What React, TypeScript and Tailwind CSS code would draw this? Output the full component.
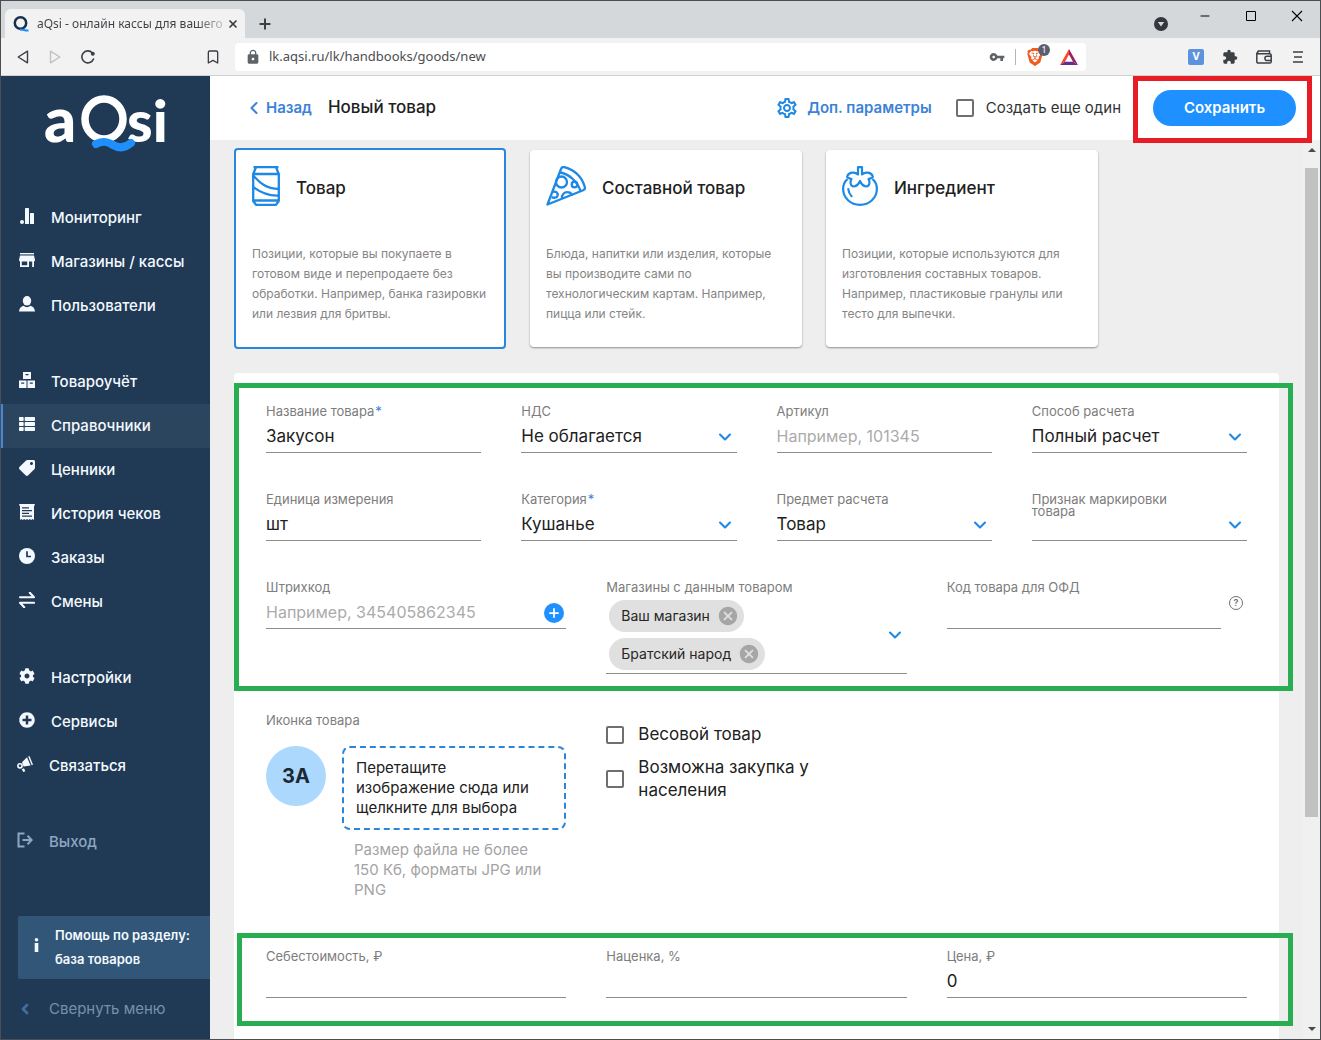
import type { ReactNode } from 'react';
import { ChevronDown, ChevronLeft, Bookmark, Plus, X, Minus } from 'lucide-react';
import { FaCog, FaPlusCircle, FaTag, FaThList } from 'react-icons/fa';
import { MdExtension, MdLock, MdOutlineSettings, MdVpnKey, MdCancel } from 'react-icons/md';
import { SiBrave } from 'react-icons/si';

const icon = 'h-4 w-4';

const BarsIcon = () => (
  <svg viewBox="0 0 16 16" className={icon} fill="currentColor">
    <circle cx="3" cy="14" r="2" />
    <rect x="6" y="0" width="4" height="16" rx="0.6" />
    <rect x="11" y="5" width="4" height="11" rx="0.6" />
  </svg>
);

const StoreIcon = () => (
  <svg viewBox="0 0 16 16" className={icon} fill="currentColor">
    <path d="M1 1h14v1.4H1z" />
    <path d="M1 3.4h14l1 4.6c0 1-.6 1.4-1 1.5V15h-1.8V9.6H10V15H1V9.5C.4 9.3 0 8.8 0 8zM2.8 9.6v3.700h5.400V9.600z" fillRule="evenodd" />
  </svg>
);

const UserIcon = () => (
  <svg viewBox="0 0 16 16" className={icon} fill="currentColor">
    <ellipse cx="8" cy="4.800" rx="4.200" ry="4.800" />
    <path d="M0 15.500c.2-3.500 2.200-5 4.600-5.700 1.800 1.800 5 1.800 6.800 0 2.400.7 4.400 2.200 4.600 5.700z" />
  </svg>
);

const BoxesIcon = () => (
  <svg viewBox="0 0 16 16" className={icon} fill="currentColor" fillRule="evenodd">
    <path d="M4 0h8v7H4zM6.500 2v1.300h3V2zM0 8.500h7.500V16H0zM2.200 10.500v1.300h3v-1.300zM8.500 8.500H16V16H8.500zM10.800 10.500v1.300h3v-1.300z" />
  </svg>
);

const ReceiptIcon = () => (
  <svg viewBox="0 0 16 16" className={icon} fill="currentColor" fillRule="evenodd">
    <path d="M.3 0h15.400v1.800H15V16l-1.400-1-1.400 1-1.400-1-1.400 1L8 15l-1.400 1-1.400-1-1.400 1-1.400-1L1 16V1.800H.3zM3 3.200v1.300h7V3.200zM3 6v1.300h10V6zM3 8.800v1.300h7V8.800zM3 11.500v1.300h10v-1.300z" />
  </svg>
);

const ClockIcon = () => (
  <svg viewBox="0 0 16 16" className={icon} fill="none">
    <circle cx="8" cy="8" r="8" fill="currentColor" />
    <path d="M8 3.200v5.300h4" stroke="#203a55" strokeWidth="1.700" />
  </svg>
);

const SwapIcon = () => (
  <svg viewBox="0 0 16 16" className={icon} fill="none" stroke="currentColor" strokeWidth="2.100" strokeLinecap="round" strokeLinejoin="round">
    <path d="M1 5.200h14L10.800.8M15 10.800H1l4.200 4.400" />
  </svg>
);

const HornIcon = () => (
  <svg viewBox="0 0 16 16" className={icon} fill="currentColor">
    <path d="M5 6.200 10 1.200l3.600 8.400-7 .8z" />
    <path d="m11.200.6 1.300-.6L16 8.700l-1.300.6z" />
    <circle cx="3" cy="9.800" r="2.100" fill="none" stroke="currentColor" strokeWidth="1.600" />
    <path d="m4.800 13.200 2.200-.9 1.300 3-2.100.7z" />
  </svg>
);

const ExitIcon = () => (
  <svg viewBox="0 0 16 16" className={icon} fill="none" stroke="currentColor" strokeWidth="2">
    <path d="M7.500 1.500h-6v13h6M5.500 8H14.500M10.500 3.800 14.700 8l-4.200 4.200" />
  </svg>
);

const Logo = () => (
  <svg viewBox="0 0 122 58" className="h-[58px] w-[122px] overflow-visible" role="img" aria-label="aQsi">
    <text x="-2" y="46" fill="#fff" fontFamily="Lato, sans-serif" fontWeight="900" fontSize="63">a</text>
    <ellipse cx="58" cy="23" rx="19" ry="20" fill="none" stroke="#fff" strokeWidth="7.500" />
    <text x="81" y="46" fill="#fff" fontFamily="Lato, sans-serif" fontWeight="900" fontSize="58">si</text>
    <path d="M50 48c7-4 12-2 17 1s11 4 18-2" fill="none" stroke="#1f8ffb" strokeWidth="8" strokeLinecap="round" />
  </svg>
);

const CanIcon = () => (
  <svg viewBox="0 0 28 40" className="h-10 w-7" fill="none" stroke="#1e88e5" strokeWidth="2.300" strokeLinejoin="round">
    <path d="M1.500 1.200h25M4 1.200 1.200 8v27L4 38.800h20l2.800-3.800V8L24 1.200M1.200 8h25.600M1.200 34.500h25.600" />
    <path d="M1.200 9.500c7 8 13 13 25.600 13.500M1.200 21c8 6 16 9 25.600 8.500" />
  </svg>
);

const PizzaIcon = () => (
  <svg viewBox="0 0 40 40" className="h-10 w-10" fill="none" stroke="#1e88e5" strokeWidth="2.300" strokeLinejoin="round">
    <path d="M1.500 38.500 15 3c.5-1.500 1.800-2.200 3.400-1.800C28.500 4 36 11.500 38.800 21c.4 1.500-.2 2.700-1.600 3.200z" />
    <path d="M14 6.500c9 1.500 17.500 9 20.500 18.500" />
    <circle cx="15.500" cy="16" r="5.500" />
    <circle cx="28.500" cy="18.500" r="2.800" />
    <path d="M6.500 26c3.500-1.500 6 1.200 5 3.800-.7 2-3.500 2.600-5.800 1.200M16 32.500c-.5-4 2.500-6.500 5.500-6.300 2.600.1 4.200 1.800 4.500 3.500" />
  </svg>
);

const TomatoIcon = () => (
  <svg viewBox="0 0 36 40" className="h-10 w-9" fill="none" stroke="#1e88e5" strokeWidth="2.200" strokeLinejoin="round">
    <path d="M5.500 13C2.700 15.500 1.100 19 1.100 22.800 1.100 32 8.700 38.900 18 38.900s16.900-6.900 16.900-16.100c0-3.800-1.600-7.300-4.400-9.800" />
    <path d="M16 8.500V1.100h4v7.400c3-3 9.500-2.500 10.800 2 .4 1.500-1.800 1.500-4.300 2.500 1.800 3 1.200 6.500-1.500 7.500-3.500 0-5.500-2-7-5.500-1.500 3.500-3.500 5.500-7 5.500-2.700-1-3.300-4.500-1.500-7.500-2.500-1-4.700-1-4.300-2.500C6.500 6 13 5.500 16 8.500z" />
    <path d="M6.300 23c.3 3 1.400 5.400 3.300 7.200" strokeLinecap="round" />
  </svg>
);

const menu = [
  [
    { name: 'Мониторинг', icon: <BarsIcon /> },
    { name: 'Магазины / кассы', icon: <StoreIcon /> },
    { name: 'Пользователи', icon: <UserIcon /> },
  ],
  [
    { name: 'Товароучёт', icon: <BoxesIcon /> },
    { name: 'Справочники', icon: <FaThList className={icon} />, active: true },
    { name: 'Ценники', icon: <FaTag className="h-4 w-4 -scale-x-100" /> },
    { name: 'История чеков', icon: <ReceiptIcon /> },
    { name: 'Заказы', icon: <ClockIcon /> },
    { name: 'Смены', icon: <SwapIcon /> },
  ],
  [
    { name: 'Настройки', icon: <FaCog className={icon} /> },
    { name: 'Сервисы', icon: <FaPlusCircle className={icon} /> },
    { name: 'Связаться', icon: <HornIcon />, action: true },
  ],
  [{ name: 'Выход', icon: <ExitIcon />, action: true, muted: true }],
];

const kinds = [
  {
    title: 'Товар',
    icon: <CanIcon />,
    text: 'Позиции, которые вы покупаете в\nготовом виде и перепродаете без\nобработки. Например, банка газировки\nили лезвия для бритвы.',
    selected: true,
  },
  {
    title: 'Составной товар',
    icon: <PizzaIcon />,
    text: 'Блюда, напитки или изделия, которые\nвы производите сами по\nтехнологическим картам. Например,\nпицца или стейк.',
  },
  {
    title: 'Ингредиент',
    icon: <TomatoIcon />,
    text: 'Позиции, которые используются для\nизготовления составных товаров.\nНапример, пластиковые гранулы или\nтесто для выпечки.',
  },
];

const stores = ['Ваш магазин', 'Братский народ'];

function FieldLabel({ id, label, required }: { id: string; label: string; required?: boolean }) {
  return (
    <label htmlFor={id} className="block h-4 pt-0.5 pr-12 text-[13px] leading-3 text-[#7d7d7d]">
      {label}
      {required && <span className="ml-px text-[#3b82d8]">*</span>}
    </label>
  );
}

type FieldProps = {
  id: string;
  label: string;
  value?: string;
  placeholder?: string;
  required?: boolean;
  children?: ReactNode;
};

function TextField({ id, label, value, placeholder, required, children }: FieldProps) {
  return (
    <div>
      <FieldLabel id={id} label={label} required={required} />
      <div className="flex h-[34px] items-center border-b border-[#8c8c8c] pt-0.5">
        <input
          id={id}
          type="text"
          defaultValue={value}
          placeholder={placeholder}
          className="w-full min-w-0 bg-transparent text-[17px] text-[#212121] outline-none placeholder:text-base placeholder:text-[#ababab]"
        />
        {children}
      </div>
    </div>
  );
}

function SelectField({ id, label, value, required }: FieldProps) {
  return (
    <div>
      <FieldLabel id={id} label={label} required={required} />
      <div className="relative border-b border-[#8c8c8c]">
        <select id={id} defaultValue={value} className="block h-[33px] w-full appearance-none bg-transparent pt-0.5 text-[17px] text-[#212121] outline-none">
          <option>{value}</option>
        </select>
        <ChevronDown className="pointer-events-none absolute top-2 right-0.5 h-5 w-5 text-[#1e88e5]" strokeWidth={2.5} />
      </div>
    </div>
  );
}

function Check({ label, className }: { label: string; className: string }) {
  return (
    <label className={`flex items-center ${className}`}>
      <input type="checkbox" className="h-[18px] w-[18px] shrink-0 appearance-none rounded-xs border-2 border-[#6f6f6f] bg-white checked:bg-[#1e90ff]" />
      <span className="whitespace-pre-line">{label}</span>
    </label>
  );
}

function BrowserChrome() {
  return (
    <header className="font-['Noto_Sans',sans-serif] text-[#3c3f43]">
      <div className="flex h-[37px] justify-between bg-[#d5d8db]">
        <div className="flex items-end pl-1">
          <div className="flex h-[29px] w-60 items-center rounded-t-md bg-[#f2f2f2] pr-1.5 pl-2">
            <svg viewBox="0 0 16 16" className="mr-2 h-4 w-4 shrink-0" fill="none">
              <circle cx="7.500" cy="7" r="5.700" stroke="#16304d" strokeWidth="2.500" />
              <path d="M7 14c3-1.500 5 1.500 8.500.3" stroke="#1e90ff" strokeWidth="2" />
            </svg>
            <span className="bg-linear-to-r from-[#3c3f43] from-85% to-[#c5c5c5] bg-clip-text text-xs whitespace-nowrap text-transparent">
              aQsi - онлайн кассы для вашего
            </span>
            <button aria-label="Закрыть вкладку" className="ml-auto">
              <X className="h-3 w-3" strokeWidth={3.5} />
            </button>
          </div>
          <button aria-label="Новая вкладка" className="mb-1.5 ml-3">
            <Plus className="h-4 w-4" strokeWidth={3} />
          </button>
        </div>
        <div className="flex items-start pt-2 pr-4 text-black">
          <svg viewBox="0 0 14 14" className="mt-2 mr-[30px] h-3.5 w-3.5">
            <circle cx="7" cy="7" r="7" fill="#35383c" />
            <path d="M3.800 5h6.400L7 9.500z" fill="#d5d8db" />
          </svg>
          <div className="flex gap-8">
            <button aria-label="Свернуть"><Minus className="h-3.5 w-3.5" strokeWidth={1.7} /></button>
            <button aria-label="Развернуть">
              <svg viewBox="0 0 14 14" className="h-3.5 w-3.5" fill="none" stroke="currentColor">
                <path d="M2.500 2.500h9v9h-9z" />
              </svg>
            </button>
            <button aria-label="Закрыть">
              <svg viewBox="0 0 14 14" className="h-3.5 w-3.5" fill="none" stroke="currentColor" strokeWidth="1.100">
                <path d="m2 2 10 10M12 2 2 12" />
              </svg>
            </button>
          </div>
        </div>
      </div>
      <div className="flex h-[38px] items-center border-b border-[#d0d0d0] bg-[#f2f2f2] pr-3.5 pl-4">
        <div className="flex gap-5">
          <button aria-label="Назад">
            <svg viewBox="0 0 12 14" className="h-3.5 w-3" fill="none" stroke="#3c3f43" strokeWidth="1.400" strokeLinejoin="round">
              <path d="M10.500 1.200v11.600L1.200 7z" />
            </svg>
          </button>
          <button aria-label="Вперёд">
            <svg viewBox="0 0 12 14" className="h-3.5 w-3" fill="none" stroke="#bfc1c3" strokeWidth="1.400" strokeLinejoin="round">
              <path d="M1.500 1.200v11.600L10.800 7z" />
            </svg>
          </button>
          <button aria-label="Обновить">
            <svg viewBox="0 0 14 14" className="h-3.5 w-3.5" fill="none" stroke="#3c3f43" strokeWidth="1.600">
              <path d="M12.500 9A6 6 0 1 1 11.200 2.700" strokeLinecap="round" />
              <circle cx="11.800" cy="3.700" r="1.200" fill="#3c3f43" />
            </svg>
          </button>
        </div>
        <Bookmark className="mr-3.5 ml-[110px] h-4 w-4" />
        <div className="flex h-7 flex-1 items-center rounded-sm bg-white pr-2 pl-2.5">
          <MdLock className="mr-2 h-4 w-4 shrink-0 text-[#5f6368]" />
          <input aria-label="Адрес" defaultValue="lk.aqsi.ru/lk/handbooks/goods/new" className="w-full min-w-0 bg-transparent text-[13px] text-[#4a4d51] outline-none" />
          <MdVpnKey className="h-4 w-4 shrink-0 text-[#5f6368]" />
          <span className="mx-2.5 h-4 w-px shrink-0 bg-[#b5b5b5]" />
          <span className="relative shrink-0">
            <SiBrave className="h-[18px] w-[18px] text-[#ef5b22]" />
            <span className="absolute -top-1 left-3 flex h-3 w-3 items-center justify-center rounded-full bg-[#5b5e6d] text-[9px] leading-none text-white">1</span>
          </span>
          <svg viewBox="0 0 18 16" className="ml-4 h-4 w-[18px] shrink-0">
            <path d="M9 0 0 16 5 12.700 9 5.600z" fill="#ff4724" />
            <path d="M9 0l9 16-5-3.300L9 5.600z" fill="#9e1f63" />
            <path d="M0 16h18l-5-3.300H5z" fill="#662d91" />
          </svg>
        </div>
        <div className="ml-[102px] flex items-center gap-[18px]">
          <span className="flex h-4 w-4 items-center justify-center rounded-xs bg-[#5c93dc] text-[11px] font-bold text-white">V</span>
          <MdExtension className="h-4 w-4" />
          <svg viewBox="0 0 16 14" className="h-3.5 w-4" fill="none" stroke="currentColor" strokeWidth="1.500">
            <path d="M13.500 3.700V1H2.500a1.600 1.600 0 0 0 0 2.800h11c1 0 1.700.6 1.700 1.500V11.500c0 .9-.6 1.600-1.600 1.600H2.400c-1 0-1.600-.7-1.600-1.600V2.500" />
            <path d="M15.200 6.300H11a2 2 0 0 0 0 4.200h4.200" />
          </svg>
          <svg viewBox="0 0 12 12" className="mx-0.5 h-3 w-3" stroke="currentColor" strokeWidth="1.500">
            <path d="M1 1h10M2 6h8M1 11h10" />
          </svg>
        </div>
      </div>
    </header>
  );
}

function Sidebar() {
  return (
    <aside className="flex w-[209px] shrink-0 flex-col bg-[#203a55] text-[#f4f9ff]">
      <a href="#home" className="mt-5 mb-[42px] ml-[45px] w-[122px]">
        <Logo />
      </a>
      <nav className="flex flex-col gap-8">
        {menu.map((group, i) => (
          <ul key={i}>
            {group.map((item) => (
              <li key={item.name}>
                <a
                  href="#menu"
                  className={`flex h-11 items-center gap-4 pl-4 text-[15px] font-medium ${item.action ? '' : 'border-l-2'} ${
                    item.active ? 'border-[#3f8ae0] bg-[#2c455e]' : 'border-transparent'
                  } ${item.muted ? 'text-[#8ea6c0]' : ''}`}
                >
                  <span className="mb-1">{item.icon}</span>
                  {item.name}
                </a>
              </li>
            ))}
          </ul>
        ))}
      </nav>
      <div className="mt-auto">
        <a href="#help" className="ml-[17px] flex items-center rounded-l-xs bg-[#315678] pt-[7px] pb-2 pl-4 text-[13px] leading-6 font-semibold">
          <svg viewBox="0 0 5 14" className="mr-4 mb-1 h-3.5 w-[5px]" fill="currentColor">
            <circle cx="2.500" cy="1.800" r="1.800" />
            <path d="M.7 5h3.600v9H.7z" />
          </svg>
          <span>
            Помощь по разделу:
            <br />
            база товаров
          </span>
        </a>
        <button className="flex h-15 items-center pl-4 text-[15px] text-[#7590ad]">
          <ChevronLeft className="mr-4 h-4 w-4 text-[#3f6fa0]" strokeWidth={4} />
          Свернуть меню
        </button>
      </div>
    </aside>
  );
}

export default function App() {
  return (
    <div className="flex h-screen flex-col overflow-hidden border border-[#4b4d50] bg-white font-[Inter,sans-serif]">
      <BrowserChrome />
      <div className="flex min-h-0 flex-1">
        <Sidebar />
        <div className="flex min-w-0 flex-1 flex-col">
          <div className="flex h-16 shrink-0 items-center bg-white pr-6 pl-[34px]">
            <a href="#back" className="flex items-center gap-0.5 text-[15px] font-semibold text-[#3b82d8]">
              <ChevronLeft className="h-5 w-5" strokeWidth={2.5} />
              Назад
            </a>
            <h1 className="ml-4 text-[17px] font-medium text-[#212121]">Новый товар</h1>
            <div className="ml-auto flex items-center">
              <button className="flex items-center gap-2 text-[15px] font-semibold text-[#3b82d8]">
                <MdOutlineSettings className="h-6 w-6 text-[#1e88e5]" />
                Доп. параметры
              </button>
              <Check label="Создать еще один" className="ml-6 gap-3 text-[15px] text-[#333]" />
              <div className="relative ml-8">
                <button className="h-9 w-[143px] rounded-full bg-[#1e90ff] text-[15px] font-semibold text-white">Сохранить</button>
                <span className="pointer-events-none absolute -top-3.5 -right-4 -bottom-[17px] -left-5 z-10 border-5 border-[#e81c24]" />
              </div>
            </div>
          </div>

          <div className="flex min-h-0 flex-1">
            <main className="flex min-w-0 flex-1 flex-col overflow-hidden bg-[#eee] px-6 pt-2">
              {/* Product kinds */}
              <div className="flex shrink-0 items-center gap-6">
                {kinds.map((kind) => (
                  <button
                    key={kind.title}
                    className={`flex w-[272px] flex-col items-start rounded-sm bg-white px-4 pt-4 text-left ${
                      kind.selected ? 'h-[201px] border-2 border-[#2a86dc]' : 'h-[197px] shadow-[0_1px_2px_rgba(0,0,0,0.4)]'
                    }`}
                  >
                    <span className="flex items-center gap-4 text-[17px] font-medium text-[#212121]">
                      {kind.icon}
                      <span className="pt-1.5">{kind.title}</span>
                    </span>
                    <span className="mt-[38px] text-xs leading-5 whitespace-pre text-[#858585]">{kind.text}</span>
                  </button>
                ))}
              </div>

              <form className="mt-6 shrink-0 grow rounded-t-sm bg-white px-8 pt-[30px]">
                <section className="relative">
                  <div className="grid grid-cols-4 gap-x-10 gap-y-[38px]">
                    <TextField id="name" label="Название товара" value="Закусон" required />
                    <SelectField id="vat" label="НДС" value="Не облагается" />
                    <TextField id="sku" label="Артикул" placeholder="Например, 101345" />
                    <SelectField id="method" label="Способ расчета" value="Полный расчет" />
                    <TextField id="unit" label="Единица измерения" value="шт" />
                    <SelectField id="category" label="Категория" value="Кушанье" required />
                    <SelectField id="subject" label="Предмет расчета" value="Товар" />
                    <SelectField id="marking" label="Признак маркировки товара" value="" />
                  </div>
                  <div className="mt-[38px] grid grid-cols-3 gap-x-10">
                    <TextField id="barcode" label="Штрихкод" placeholder="Например, 345405862345">
                      <button type="button" aria-label="Добавить штрихкод" className="mr-0.5 flex h-5 w-5 shrink-0 items-center justify-center rounded-full bg-[#1e90ff] text-white">
                        <Plus className="h-3.5 w-3.5" strokeWidth={3} />
                      </button>
                    </TextField>
                    <div>
                      <FieldLabel id="stores" label="Магазины с данным товаром" />
                      <div className="flex items-center justify-between border-b border-[#8c8c8c] pt-[5px] pr-0.5 pb-[3px] pl-[3px]">
                        <div className="flex flex-col items-start gap-1.5">
                          {stores.map((store) => (
                            <span key={store} className="flex h-8 items-center gap-[7px] rounded-full bg-[#e0e0e0] pr-[5px] pl-3 text-sm text-[#262626]">
                              {store}
                              <button type="button" aria-label={`Убрать ${store}`}>
                                <MdCancel className="h-[22px] w-[22px] text-[#a6a6a6]" />
                              </button>
                            </span>
                          ))}
                        </div>
                        <button id="stores" type="button" aria-label="Выбрать магазины">
                          <ChevronDown className="h-5 w-5 text-[#1e88e5]" strokeWidth={2.5} />
                        </button>
                      </div>
                    </div>
                    <div className="flex">
                      <div className="flex-1">
                        <TextField id="ofd" label="Код товара для ОФД" />
                      </div>
                      <button type="button" aria-label="Подсказка" className="mt-[17px] mr-1 ml-2 flex h-3.5 w-3.5 items-center justify-center rounded-full border border-[#6f6f6f] text-[9px] font-semibold text-[#6f6f6f]">
                        ?
                      </button>
                    </div>
                  </div>
                  <span className="pointer-events-none absolute -top-5 -right-[46px] -bottom-[17px] -left-8 border-5 border-[#28ae50]" />
                </section>

                <section className="mt-[38px] grid grid-cols-3 gap-x-10">
                  <div>
                    <FieldLabel id="image" label="Иконка товара" />
                    <div className="mt-[18px] flex gap-4">
                      <div className="flex h-15 w-15 shrink-0 items-center justify-center rounded-full bg-[#acd8fe] text-xl font-bold text-[#1b2733]">ЗА</div>
                      <div className="min-w-0 flex-1">
                        <button id="image" type="button" className="block h-21 w-full rounded-lg border-2 border-dashed border-[#2a86dc] px-3 text-left text-[15px] leading-5 whitespace-pre text-[#212121]">
                          {'Перетащите\nизображение сюда или\nщелкните для выбора'}
                        </button>
                        <p className="mt-2.5 pl-3 text-[15px] leading-5 whitespace-pre-line text-[#a3a3a3]">{'Размер файла не более\n150 Кб, форматы JPG или\nPNG'}</p>
                      </div>
                    </div>
                  </div>
                  <div className="pt-[11px]">
                    <Check label="Весовой товар" className="gap-3.5 text-[17px] leading-[23px] text-[#212121]" />
                    <Check label={'Возможна закупка у\nнаселения'} className="mt-2.5 gap-3.5 text-[17px] leading-[23px] text-[#212121]" />
                  </div>
                </section>

                <section className="relative mt-12 grid grid-cols-3 gap-x-10">
                  <TextField id="cost" label="Себестоимость, ₽" />
                  <TextField id="markup" label="Наценка, %" />
                  <TextField id="price" label="Цена, ₽" value="0" />
                  <span className="pointer-events-none absolute -top-[15px] -right-[46px] -bottom-7 -left-[29px] border-5 border-[#28ae50]" />
                </section>
              </form>
            </main>

            {/* Scrollbar */}
            <div className="flex w-[17px] shrink-0 flex-col items-center bg-[#f0f0f0] py-2">
              <svg viewBox="0 0 8 4" className="h-1 w-2" fill="#4a4a4a"><path d="M0 4 4 0l4 4z" /></svg>
              <div className="my-4 w-full flex-1">
                <div className="ml-0.5 h-[77%] w-[13px] bg-[#c1c1c1]" />
              </div>
              <svg viewBox="0 0 8 4" className="h-1 w-2" fill="#4a4a4a"><path d="M0 0l4 4 4-4z" /></svg>
            </div>
          </div>
        </div>
      </div>
    </div>
  );
}
